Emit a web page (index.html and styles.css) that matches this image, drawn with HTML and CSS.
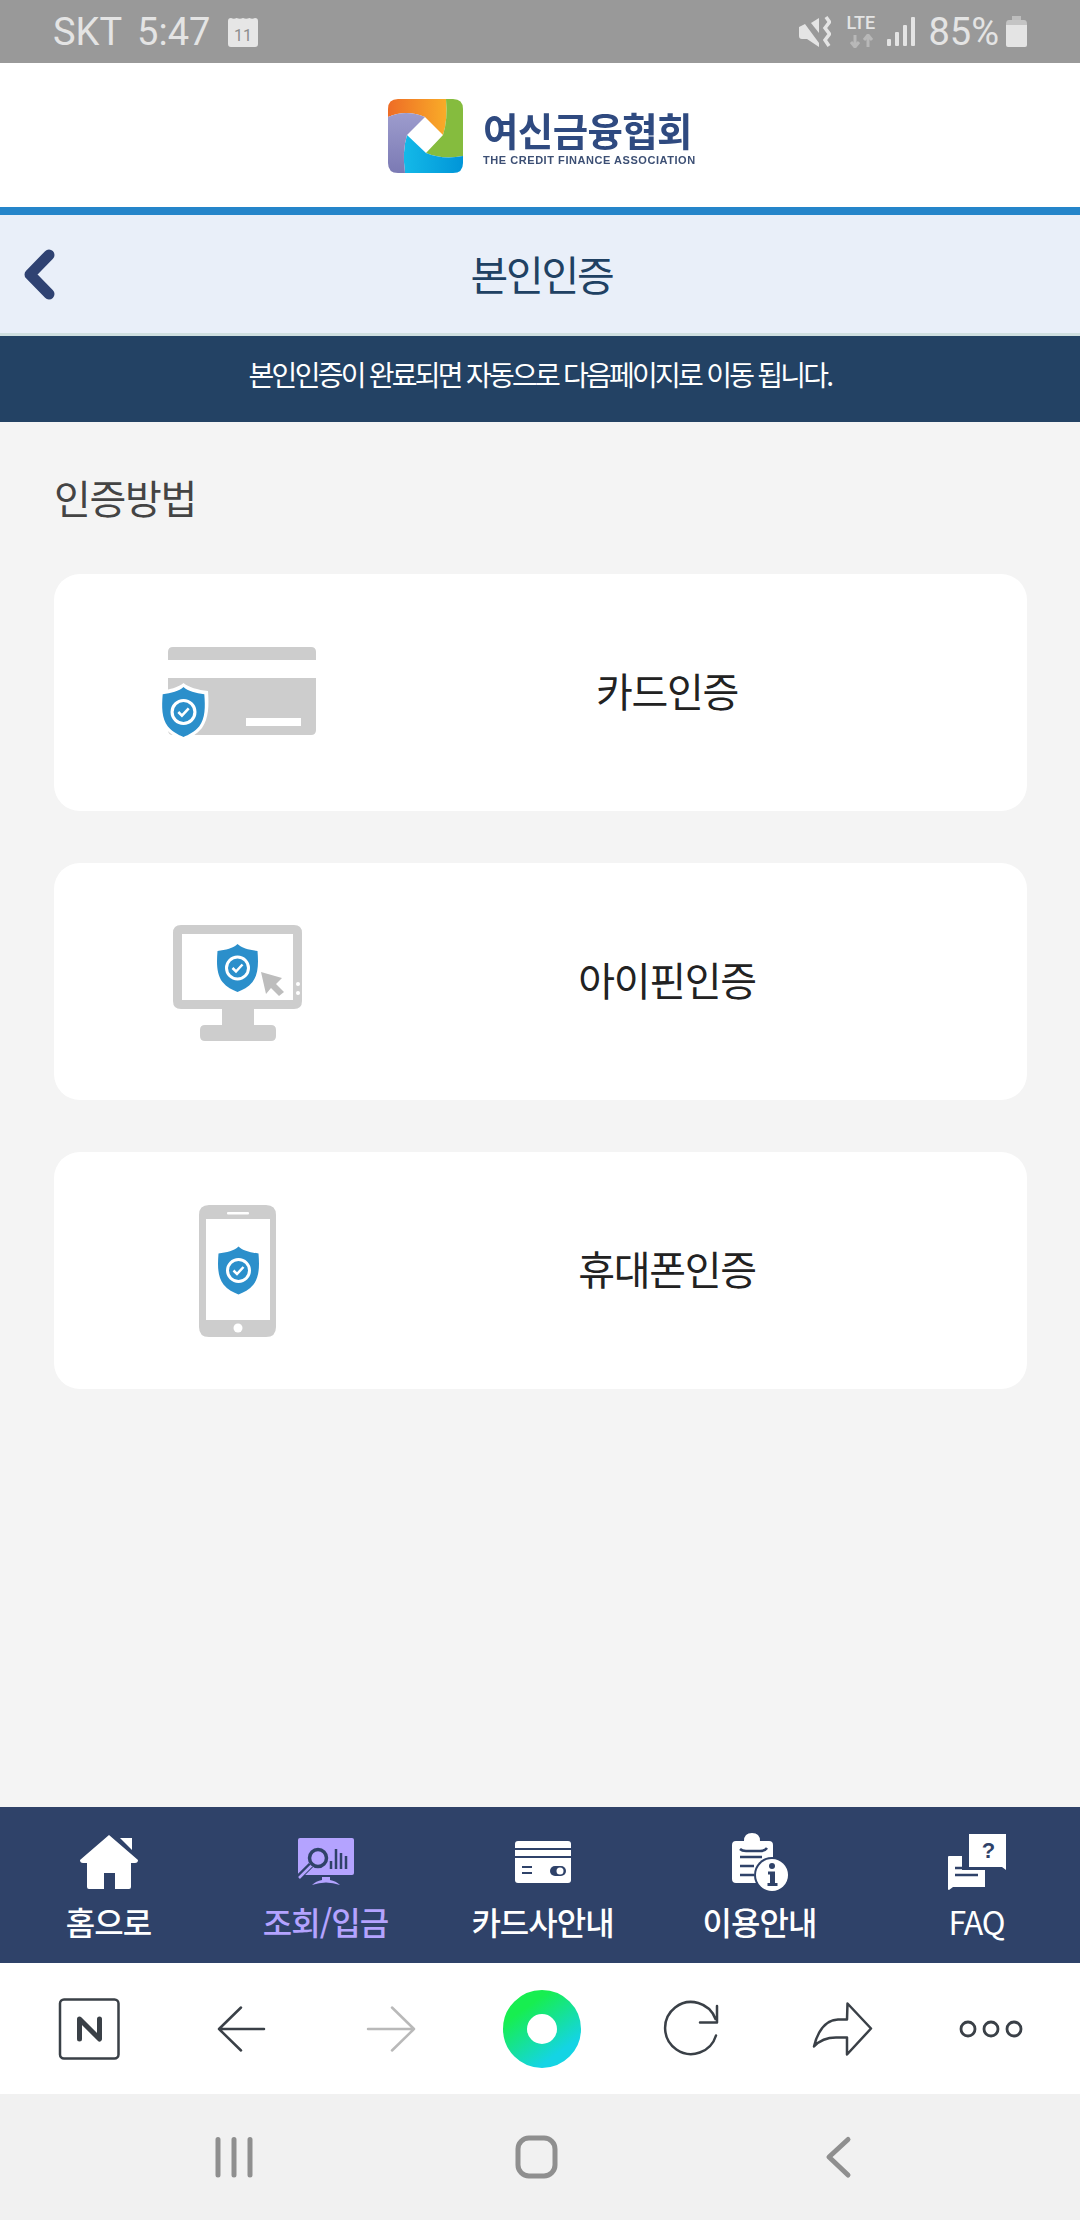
FILE: index.html
```html
<!DOCTYPE html>
<html lang="ko">
<head>
	<meta charset="UTF-8">
	<title>본인인증</title>
	<link rel="stylesheet" href="styles.css">
</head>
<body>
<div class="page">
	<div class="status">
		<div class="status-left">
			<span>SKT</span>
			<span class="clock">5:47</span>
			<svg class="ic-cal" viewBox="0 0 30 30">
				<path d="M3 1 Q6 2.500 8.500 1 Q12 2.500 15 1 Q18 2.500 21.500 1 Q24 2.500 27 1 Q30 1 30 4 V27 Q30 30 27 30 H3 Q0 30 0 27 V4 Q0 1 3 1Z" fill="#e6e6e6"/>
				<text x="15" y="24" text-anchor="middle" class="cal-num">11</text>
			</svg>
		</div>
		<div class="status-right">
			<svg class="ic-mute" viewBox="0 0 32 31">
				<path d="M0 11 L6 8 L20 27 V31 L8 23 H3 Q0 23 0 20Z" fill="#e4e4e4"/>
				<path d="M12 7 L20 2 V17Z" fill="#e4e4e4"/>
				<path d="M27 1 L30.500 6 L26 12 L30.500 18 L26 24 L30 30" fill="none" stroke="#e4e4e4" stroke-width="3.500"/>
			</svg>
			<div class="lte">
				<span>LTE</span>
				<svg class="ic-lte" viewBox="0 0 32 14">
					<path d="M9 1 V12 M5 8 L9 13 L13 8 M22 13 V2 M18 6 L22 1 L26 6" fill="none" stroke="#b8b8b8" stroke-width="3"/>
				</svg>
			</div>
			<svg class="ic-signal" viewBox="0 0 28 29">
				<rect x="0" y="22" width="4" height="7" rx="1" fill="#e4e4e4"/>
				<rect x="8" y="15" width="4" height="14" rx="1" fill="#e4e4e4"/>
				<rect x="16" y="8" width="4" height="21" rx="1" fill="#e4e4e4"/>
				<rect x="24" y="0" width="4" height="29" rx="1" fill="#e4e4e4"/>
			</svg>
			<span class="pct">85%</span>
			<svg class="ic-batt" viewBox="0 0 21 31">
				<rect x="6" y="0" width="9" height="5" fill="#bdbdbd"/>
				<path d="M0 8 Q0 4 3 4 H18 Q21 4 21 8 V9 H0Z" fill="#c4c4c4"/>
				<path d="M0 9 H21 V29 Q21 31 19 31 H2 Q0 31 0 29Z" fill="#e4e4e4"/>
			</svg>
		</div>
	</div>

	<div class="logo-bar">
		<div class="logo">
			<svg class="logo-mark" viewBox="0 0 75 74">
				<defs>
					<linearGradient id="lgOrange" x1="0" x2="1" y1="0" y2="0"><stop offset="0" stop-color="#ee6c26"/><stop offset="1" stop-color="#f9ac28"/></linearGradient>
					<linearGradient id="lgPurple" x1="0" x2="0" y1="0" y2="1"><stop offset="0" stop-color="#9d9ccd"/><stop offset="1" stop-color="#7b7ab4"/></linearGradient>
					<linearGradient id="lgBlue" x1="0" x2="1" y1="0" y2="0"><stop offset="0" stop-color="#14b9e8"/><stop offset="1" stop-color="#0095d8"/></linearGradient>
				</defs>
				<path d="M0 18 V10 Q0 0 10 0 H58 Q60 20 55 36 L37 18 Q18 10 0 18Z" fill="url(#lgOrange)"/>
				<path d="M58 0 H65 Q75 0 75 10 V57 Q55 61 38 54 L55 36 Q60 20 58 0Z" fill="#85bc3e"/>
				<path d="M75 57 V64 Q75 74 65 74 H17 Q14 52 19 36 L38 54 Q55 61 75 57Z" fill="url(#lgBlue)"/>
				<path d="M0 18 Q18 10 37 18 L19 36 Q14 52 17 74 H10 Q0 74 0 64Z" fill="url(#lgPurple)"/>
			</svg>
			<div class="logo-text">
				<div class="logo-ko">여신금융협회</div>
				<div class="logo-en">THE CREDIT FINANCE ASSOCIATION</div>
			</div>
		</div>
	</div>

	<div class="title-bar">
		<svg class="ic-back" viewBox="0 0 32 51">
			<path d="M26 6 L7 25.500 L26 45" fill="none" stroke="#2f4272" stroke-width="11" stroke-linecap="round" stroke-linejoin="round"/>
		</svg>
		<h1>본인인증</h1>
	</div>
	<div class="notice">본인인증이 완료되면 자동으로 다음페이지로 이동 됩니다.</div>

	<div class="content">
		<h2>인증방법</h2>
		<div class="method">
			<svg class="ic-method" viewBox="148 632 180 120">
				<defs>
					<g id="shield">
						<path d="M0 -24 C4 -20 12 -18 20 -17 C21 -5 21 6 15 14 C11 19 5 22 0 24 C-5 22 -11 19 -15 14 C-21 6 -21 -5 -20 -17 C-12 -18 -4 -20 0 -24Z" fill="#2b8fcb"/>
						<circle r="11" fill="none" stroke="#fff" stroke-width="3"/>
						<path d="M-5 0 L-1.500 3.500 L5 -3.500" fill="none" stroke="#fff" stroke-width="2.500"/>
					</g>
				</defs>
				<path d="M168 659 V651 Q168 646 173 646 H311 Q316 646 316 651 V659Z" fill="#cdcdcd"/>
				<path d="M168 677 H316 V729 Q316 734 311 734 H173 Q168 734 168 729Z" fill="#cdcdcd"/>
				<rect x="246" y="717" width="55" height="8" fill="#fff"/>
				<path d="M183.500 682 C188 686 198 689 208 690 C209 704 209 717 202 727 C197 733 190 737 183.500 740 C177 737 170 733 165 727 C158 717 158 704 159 690 C169 689 179 686 183.500 682Z" fill="#fff"/>
				<use href="#shield" transform="translate(183.500 711) scale(1.040)"/>
			</svg>
			<span>카드인증</span>
		</div>
		<div class="method">
			<svg class="ic-method" viewBox="148 921 180 120">
				<path fill-rule="evenodd" d="M181 924 H294 Q302 924 302 932 V1000 Q302 1008 294 1008 H254 V1024 H271 Q276 1024 276 1029 V1035 Q276 1040 271 1040 H205 Q200 1040 200 1035 V1029 Q200 1024 205 1024 H222 V1008 H181 Q173 1008 173 1000 V932 Q173 924 181 924Z M182 933 V999 H293 V933Z" fill="#cdcdcd"/>
				<circle cx="298" cy="983" r="2" fill="#fff"/>
				<circle cx="298" cy="992" r="2" fill="#fff"/>
				<path d="M261 971 L282 977 L276 983 L284 991 L279 995 L271 987 L266 993Z" fill="#bdbdbd"/>
				<use href="#shield" x="237.500" y="967"/>
			</svg>
			<span>아이핀인증</span>
		</div>
		<div class="method">
			<svg class="ic-method ic-phone" viewBox="148 1201 180 140">
				<path fill-rule="evenodd" d="M209 1205 H266 Q276 1205 276 1215 V1327 Q276 1337 266 1337 H209 Q199 1337 199 1327 V1215 Q199 1205 209 1205Z M206 1219 V1320 H270 V1219Z" fill="#cdcdcd"/>
				<rect x="227" y="1212" width="22" height="2.500" rx="1" fill="#fff"/>
				<circle cx="238" cy="1328" r="4.500" fill="#fff"/>
				<use href="#shield" x="238.500" y="1270.500"/>
			</svg>
			<span>휴대폰인증</span>
		</div>
	</div>

	<div class="tabs">
		<a class="tab">
			<span class="tab-icon">
				<svg class="ic-home" viewBox="0 0 58 54">
					<path d="M29 0 L58 25 Q58 28 55 28 H51 V52 Q51 54 49 54 H35 V38 H24 V54 H9 Q7 54 7 52 V28 H3 Q0 28 0 25Z" fill="#fff"/>
					<path d="M40 3 H52 V15Z" fill="#fff"/>
				</svg>
			</span>
			<span>홈으로</span>
		</a>
		<a class="tab tab-on">
			<span class="tab-icon">
				<svg class="ic-chart" viewBox="0 0 56 49">
					<path d="M2 0 H54 Q56 0 56 2 V35 Q56 37 54 37 H0 V2 Q0 0 2 0Z" fill="#b4a3ff"/>
					<path d="M13 27 L0 40" stroke="#2f4269" stroke-width="6"/>
					<path d="M14 27 L1 40" stroke="#b4a3ff" stroke-width="2.500"/>
					<circle cx="20" cy="20" r="8.500" fill="#b4a3ff" stroke="#2f4269" stroke-width="3.500"/>
					<path d="M33 23 V31 M38 11 V31 M43 15 V31 M48 18 V31" stroke="#2f4269" stroke-width="2.500"/>
					<path d="M24 39 H32 V42 Q38 43 42 47 Q28 42 14 47 Q18 43 24 42Z" fill="#b4a3ff"/>
				</svg>
			</span>
			<span>조회/입금</span>
		</a>
		<a class="tab">
			<span class="tab-icon">
				<svg class="ic-card" viewBox="0 0 56 42">
					<rect width="56" height="42" rx="3" fill="#fff"/>
					<path d="M0 8 H56 M0 16 H56" stroke="#2f4269" stroke-width="1.800"/>
					<path d="M7 26 H17 M7 32 H17" stroke="#2f4269" stroke-width="1.800"/>
					<rect x="35" y="25" width="16" height="10" rx="5" fill="#2f4269"/>
					<circle cx="45" cy="30" r="3.500" fill="#fff"/>
				</svg>
			</span>
			<span>카드사안내</span>
		</a>
		<a class="tab">
			<span class="tab-icon">
				<svg class="ic-clip" viewBox="0 0 56 58">
					<path d="M4 8 H12 Q12 0 20 0 Q28 0 28 8 H37 Q41 8 41 12 V50 H4 Q0 50 0 46 V12 Q0 8 4 8Z" fill="#fff"/>
					<path d="M8 16 Q10 18 14 18 H28 Q33 18 35 15 M8 24 H30 M8 33 H22 M8 42 H22" fill="none" stroke="#2f4269" stroke-width="2.500"/>
					<circle cx="40" cy="42" r="18" fill="#2f4269"/>
					<circle cx="40" cy="42" r="16" fill="#fff"/>
					<circle cx="40" cy="33" r="3" fill="#2f4269"/>
					<path d="M36 38.500 H43 V50 H45.500 V53 H35.500 V50 H38 V41.500 H36Z" fill="#2f4269"/>
				</svg>
			</span>
			<span>이용안내</span>
		</a>
		<a class="tab tab-latin">
			<span class="tab-icon">
				<svg class="ic-faq" viewBox="0 0 58 56">
					<path d="M1 22 H14 V36 H37 V53 H5 L1 56 Q0 56 0 55 V23 Q0 22 1 22Z" fill="#fff"/>
					<path d="M21 0 H58 V36 L54 33 H21Z" fill="#fff"/>
					<text x="40" y="24" text-anchor="middle" class="faq-q">?</text>
					<path d="M7 34 H14 M7 41 H30" stroke="#2f4269" stroke-width="2.500"/>
				</svg>
			</span>
			<span>FAQ</span>
		</a>
	</div>

	<div class="toolbar">
		<svg class="ic-tool" viewBox="0 0 70 70">
			<rect x="2" y="5.500" width="58.500" height="59" rx="4" fill="none" stroke="#3a4047" stroke-width="2.500"/>
			<path d="M21.500 45 V25 L41.500 45 V25" fill="none" stroke="#3a4047" stroke-width="5" stroke-linecap="round" stroke-linejoin="round"/>
		</svg>
		<svg class="ic-tool" viewBox="0 0 70 70">
			<path d="M56 35 H11 M33 13.500 L11 35 L33 56.500" fill="none" stroke="#3a4047" stroke-width="2.500" stroke-linecap="round" stroke-linejoin="round"/>
		</svg>
		<svg class="ic-tool" viewBox="0 0 70 70">
			<path d="M10 35 H56 M34 13.500 L56 35 L34 56.500" fill="none" stroke="#b9b9b9" stroke-width="2.500" stroke-linecap="round" stroke-linejoin="round"/>
		</svg>
		<svg class="ic-whale" viewBox="0 0 78 78">
			<defs>
				<linearGradient id="whale" x1="0.200" y1="0.100" x2="0.800" y2="0.950"><stop offset="0" stop-color="#17ee50"/><stop offset="1" stop-color="#14d4e4"/></linearGradient>
			</defs>
			<circle cx="39" cy="39" r="27" fill="none" stroke="url(#whale)" stroke-width="24"/>
		</svg>
		<svg class="ic-tool" viewBox="0 0 70 70">
			<path d="M58 41.500 A26 26 0 1 1 57.500 25 M59 12 V28.500 H42" fill="none" stroke="#3a4047" stroke-width="2.500" stroke-linecap="round" stroke-linejoin="round"/>
		</svg>
		<svg class="ic-tool" viewBox="0 0 70 70">
			<path d="M39.500 9.500 L63 34.500 L39 60.500 V43.500 H28 C18 43.500 12 46 6 52.500 C9 40 16 26 30 25.500 H39Z" fill="none" stroke="#3a4047" stroke-width="2.500" stroke-linecap="round" stroke-linejoin="round"/>
		</svg>
		<svg class="ic-tool" viewBox="0 0 70 70">
			<circle cx="10" cy="35" r="7" fill="none" stroke="#3a4047" stroke-width="2.800"/>
			<circle cx="33" cy="35" r="7" fill="none" stroke="#3a4047" stroke-width="2.800"/>
			<circle cx="56" cy="35" r="7" fill="none" stroke="#3a4047" stroke-width="2.800"/>
		</svg>
	</div>

	<div class="softkeys">
		<svg class="ic-soft" viewBox="0 0 50 44">
			<path d="M9 4.500 V40 M25 4.500 V40 M41 4.500 V40" stroke="#8f8f8f" stroke-width="5" stroke-linecap="round"/>
		</svg>
		<svg class="ic-soft" viewBox="0 0 50 44">
			<rect x="7" y="3" width="37" height="38" rx="11" fill="none" stroke="#8f8f8f" stroke-width="5"/>
		</svg>
		<svg class="ic-soft" viewBox="0 0 50 44">
			<path d="M35 4.500 L16 22 L35 40" fill="none" stroke="#8f8f8f" stroke-width="5" stroke-linecap="round" stroke-linejoin="round"/>
		</svg>
	</div>
</div>
</body>
</html>
```

FILE: styles.css
```css
*{margin:0;padding:0;box-sizing:border-box;}
body{font-family:"Noto Sans CJK KR","Noto Sans",sans-serif;background:#f4f4f4;overflow:hidden;}
svg{display:block;flex:none;}
.page{height:2220px;display:flex;flex-direction:column;overflow:hidden;}

/* status bar */
.status{height:63px;background:#999;color:#e4e4e4;display:flex;justify-content:space-between;align-items:center;padding:0 53px;font:38px/1 Roboto,sans-serif;}
.status-left,.status-right{display:flex;align-items:center;}
.clock{margin-left:15px;}
.ic-cal{width:30px;height:30px;margin-left:18px;}
.cal-num{font:16px Roboto,sans-serif;fill:#8d8d8d;}
.ic-mute{width:32px;height:31px;}
.lte{width:32px;margin-left:15px;font:500 18px/14px Roboto,sans-serif;display:flex;flex-direction:column;gap:4px;}
.ic-lte{width:32px;height:14px;}
.ic-signal{width:28px;height:29px;margin-left:9px;}
.pct{margin-left:13px;}
.ic-batt{width:21px;height:31px;margin-left:7px;}

/* logo */
.logo-bar{height:144px;background:#fff;display:flex;justify-content:center;align-items:center;padding-top:2px;}
.logo{display:flex;align-items:center;gap:20px;margin-left:1px;}
.logo-mark{width:75px;height:74px;filter:blur(.5px);}
.logo-text{width:210px;filter:blur(.4px);}
.logo-ko{font-size:38.500px;line-height:46px;font-weight:700;color:#2f4a80;letter-spacing:-.6px;white-space:nowrap;}
.logo-en{font:bold 11px/12px "Liberation Sans",sans-serif;color:#3c4f74;white-space:nowrap;margin-top:2px;letter-spacing:.55px;}

/* title */
.title-bar{height:129px;background:#e9eff9;border-top:8px solid #2585ca;border-bottom:3px solid #cfdfe0;display:grid;grid-template-columns:1fr auto 1fr;align-items:center;padding-left:23px;}
.ic-back{width:32px;height:51px;}
h1{font-size:41px;line-height:50px;font-weight:400;color:#204163;letter-spacing:-2.200px;margin-right:20px;padding-bottom:3px;}
.notice{height:86px;background:#234264;color:#fff;display:flex;align-items:center;justify-content:center;padding-bottom:11px;font-size:28px;letter-spacing:-2.750px;}

/* method list */
.content{flex:1;padding:51px 53px 0 54px;}
h2{font-size:40px;line-height:48px;font-weight:400;color:#444;letter-spacing:-1.300px;margin-bottom:53px;}
.method{height:237px;background:#fff;border-radius:26px;margin-bottom:52px;display:grid;grid-template-columns:368px 1fr;align-items:center;padding-right:115px;font-size:40px;color:#222;letter-spacing:-1.300px;text-align:center;}
.method span{padding-bottom:6px;}
.ic-method{width:180px;height:120px;justify-self:center;}
.ic-phone{height:140px;}

/* bottom tabs */
.tabs{height:156px;background:#2f4269;display:grid;grid-template-columns:repeat(5,217px);overflow:hidden;flex:none;}
.tab{display:flex;flex-direction:column;align-items:center;padding-top:26px;color:#fff;font-size:32px;font-weight:500;line-height:40px;letter-spacing:-1px;white-space:nowrap;}
.tab-on{color:#b4a3ff;}
.tab-latin{font-weight:400;}
.tab-icon{height:58px;margin-bottom:10px;display:flex;align-items:center;}
.ic-home{width:58px;height:54px;}
.ic-chart{width:56px;height:49px;}
.ic-card{width:56px;height:42px;}
.ic-clip{width:56px;height:58px;}
.ic-faq{width:58px;height:56px;}
.faq-q{font:bold 22px "Liberation Sans",sans-serif;fill:#2f4269;}

/* browser toolbar */
.toolbar{height:131px;background:#fff;display:grid;grid-template-columns:repeat(7,150px);justify-content:center;justify-items:center;align-items:center;padding-left:6px;flex:none;}
.ic-tool{width:70px;height:70px;}
.ic-whale{width:78px;height:78px;margin-right:3px;}

/* android keys */
.softkeys{height:126px;background:#f1f1f1;display:grid;grid-template-columns:repeat(3,302px);justify-content:center;justify-items:center;align-items:center;padding-right:8px;flex:none;}
.ic-soft{width:50px;height:44px;}
```
